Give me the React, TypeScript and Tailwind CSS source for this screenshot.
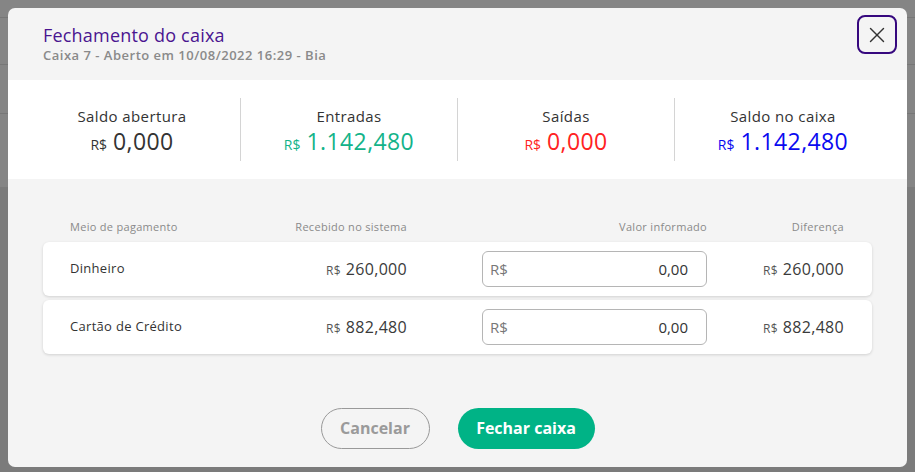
import React from 'react';
import { X } from 'lucide-react';

const font = { fontFamily: '"Open Sans", "Noto Sans", sans-serif' };

interface Stat {
  label: string;
  value: string;
  color: string;
}

const stats: Stat[] = [
  { label: 'Saldo abertura', value: '0,000', color: 'text-[#333333]' },
  { label: 'Entradas', value: '1.142,480', color: 'text-[#13b389]' },
  { label: 'Saídas', value: '0,000', color: 'text-[#ff2222]' },
  { label: 'Saldo no caixa', value: '1.142,480', color: 'text-[#0a0af0]' },
];

const rows = [
  { name: 'Dinheiro', received: '260,000', diff: '260,000' },
  { name: 'Cartão de Crédito', received: '882,480', diff: '882,480' },
];

const Money: React.FC<{ value: string }> = ({ value }) => (
  <span className="text-[16px] tracking-[0.3px] text-[#3a3a3a]">
    <span className="text-[12px] text-[#555] mr-[5px]">R$</span>
    {value}
  </span>
);

export default function App() {
  return (
    <div className="relative w-[915px] h-[472px] overflow-hidden bg-[#7b7b7b]" style={font}>
      {/* page behind the overlay */}
      <div className="flex flex-col h-[187px] bg-[#858585]">
        <div className="h-[18px] border-b border-[#777]" />
        <div className="h-[47px] border-b border-[#777]" />
        <div className="h-[49px] border-b border-[#777]" />
      </div>

      <div className="absolute left-[8px] top-[8px] w-[899px] h-[459px] rounded-[7px] bg-[#f4f4f4] overflow-hidden flex flex-col">
        {/* header */}
        <div className="h-[72px] flex justify-between pl-[35px] pr-[10px] pt-[15px]">
          <div>
            <h2 className="text-[18px] leading-[24px] tracking-[0.2px] text-[#4a1590]">Fechamento do caixa</h2>
            <p className="text-[13px] leading-[16px] tracking-[0.5px] font-semibold text-[#8a8a8a]">
              Caixa 7 - Aberto em 10/08/2022 16:29 - Bia
            </p>
          </div>
          <button className="-mt-[8px] w-[40px] h-[39px] rounded-[8px] border-2 border-[#36087e] flex items-center justify-center">
            <X className="w-[26px] h-[26px] text-[#333]" strokeWidth={1.3} />
          </button>
        </div>

        {/* totals */}
        <div className="h-[99px] bg-white flex items-center px-[16px]">
          {stats.map((s, i) => (
            <div
              key={s.label}
              className={`flex-1 h-[63px] flex flex-col items-center justify-center pt-[3px] ${i < 3 ? 'border-r border-[#d4d4d4]' : ''}`}
            >
              <span className="text-[15px] leading-[20px] tracking-[0.4px] text-[#333]">{s.label}</span>
              <div className={`flex items-baseline h-[30px] leading-[30px] ${s.color}`}>
                <span className="text-[14px] mr-[6px]">R$</span>
                <span className="text-[23px] tracking-[0.4px]">{s.value}</span>
              </div>
            </div>
          ))}
        </div>

        {/* table */}
        <div className="flex-1 flex flex-col px-[35px] pt-[38px]">
          <div className="flex items-center h-[20px] px-[27px] pr-[28px] text-[11px] tracking-[0.3px] text-[#8a8a8a]">
            <span className="w-[160px]">Meio de pagamento</span>
            <span className="w-[177px] text-right">Recebido no sistema</span>
            <span className="w-[225px] ml-[75px] text-right">Valor informado</span>
            <span className="flex-1 text-right">Diferença</span>
          </div>
          <div className="flex flex-col gap-[4px] mt-[5px]">
            {rows.map((r) => (
              <div
                key={r.name}
                className="h-[54px] bg-white rounded-[6px] shadow-[0_1px_3px_rgba(0,0,0,0.15)] flex items-center pl-[27px] pr-[28px]"
              >
                <span className="w-[160px] text-[13px] tracking-[0.3px] text-[#333]">{r.name}</span>
                <span className="w-[177px] text-right">
                  <Money value={r.received} />
                </span>
                <div className="w-[225px] ml-[75px] h-[36px] border border-[#b5b5b5] rounded-[6px] flex items-center justify-between px-[7px] pr-[18px] text-[15px]">
                  <span className="text-[#777]">R$</span>
                  <span className="text-[#333]">0,00</span>
                </div>
                <span className="flex-1 text-right">
                  <Money value={r.diff} />
                </span>
              </div>
            ))}
          </div>

          <div className="flex justify-center gap-[28px] mt-[54px]">
            <button className="w-[109px] h-[41px] rounded-full border border-[#999] text-[16px] font-bold text-[#9a9a9a] pb-[2px]">
              Cancelar
            </button>
            <button className="w-[137px] h-[41px] rounded-full bg-[#00b386] text-[16px] font-bold text-white pb-[2px]">
              Fechar caixa
            </button>
          </div>
        </div>
      </div>
    </div>
  );
}
